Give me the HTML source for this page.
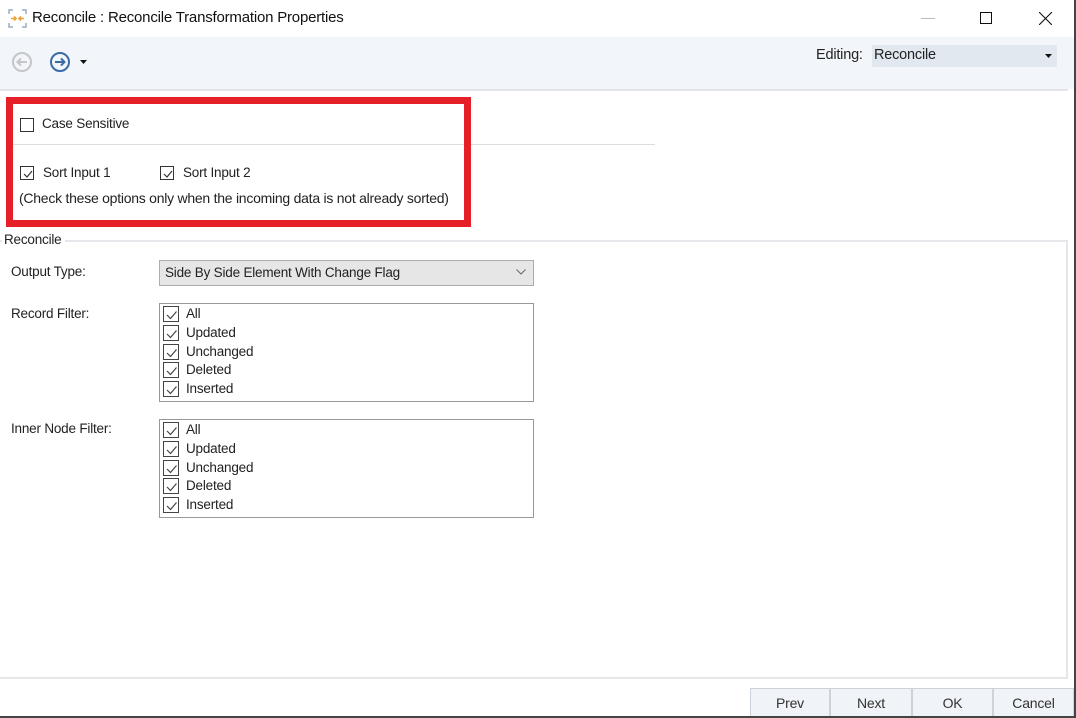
<!DOCTYPE html>
<html><head><meta charset="utf-8"><style>
*{margin:0;padding:0;box-sizing:border-box}
body{width:1076px;height:718px;position:relative;background:#fff;font-family:"Liberation Sans",sans-serif;font-size:13.5px;color:#222;overflow:hidden;letter-spacing:-0.2px}
.a{position:absolute;white-space:nowrap}
.cb{position:absolute;width:14px;height:14px;border:1px solid #333;background:#fff}
.cb svg{position:absolute;left:1px;top:1px}
.btn{position:absolute;top:688px;height:30px;background:#f0f3f7;border:1px solid #ccd3dc;text-align:center;line-height:28px;font-size:14px;color:#333}
</style></head><body>
<svg class="a" style="left:8px;top:9px" width="19" height="19" viewBox="0 0 19 19">
<path d="M1 5V1h4M14 1h4v4M18 14v4h-4M5 18H1v-4" fill="none" stroke="#9aaec4" stroke-width="1.5"/>
<path d="M3 9.5h5M6 7.5l2 2-2 2M16 9.5h-5M13 7.5l-2 2 2 2" fill="none" stroke="#e8a23a" stroke-width="1.6"/>
</svg>
<div class="a" style="left:32px;top:9px;font-size:15px;color:#111;letter-spacing:-0.2px">Reconcile : Reconcile Transformation Properties</div>
<div class="a" style="left:921px;top:18px;width:14px;height:1px;background:#bbb"></div>
<div class="a" style="left:980px;top:12px;width:12px;height:12px;border:1px solid #111"></div>
<svg class="a" style="left:1039px;top:12px" width="13" height="13"><path d="M0 0L13 13M13 0L0 13" stroke="#111" stroke-width="1.1"/></svg>
<div class="a" style="left:0;top:37px;width:1076px;height:52px;background:#f2f5f9"></div>
<div class="a" style="left:0;top:89px;width:1068px;height:2px;background:#e3e5e8"></div>
<svg class="a" style="left:11px;top:51px" width="22" height="22" viewBox="0 0 22 22"><circle cx="11" cy="11" r="9" fill="none" stroke="#c4c6c9" stroke-width="2"/><path d="M16 11H7M10 7.5L6.5 11 10 14.5" fill="none" stroke="#c4c6c9" stroke-width="2"/></svg>
<svg class="a" style="left:49px;top:51px" width="22" height="22" viewBox="0 0 22 22"><circle cx="11" cy="11" r="9" fill="none" stroke="#3a6aa8" stroke-width="2"/><path d="M6 11h9M12 7.5l3.5 3.5-3.5 3.5" fill="none" stroke="#3a6aa8" stroke-width="2"/></svg>
<svg class="a" style="left:80px;top:60px" width="7" height="4"><path d="M0 0h7L3.5 4z" fill="#111"/></svg>
<div class="a" style="left:816px;top:47px;font-size:14.5px;color:#222">Editing:</div>
<div class="a" style="left:872px;top:45px;width:185px;height:22px;background:#e1e8f0"></div>
<div class="a" style="left:874px;top:47px;font-size:14.5px;color:#222">Reconcile</div>
<svg class="a" style="left:1045px;top:54px" width="7" height="4"><path d="M0 0h7L3.5 4z" fill="#111"/></svg>
<div class="cb" style="left:20px;top:118px"></div>
<div class="a" style="left:42px;top:116px">Case Sensitive</div>
<div class="a" style="left:13px;top:144px;width:642px;height:1px;background:#dcdde0"></div>
<div class="cb" style="left:20px;top:166px"><svg width="12" height="12"><path d="M2 6l3 3 5-6" fill="none" stroke="#333" stroke-width="1.2"/></svg></div>
<div class="a" style="left:43px;top:165px">Sort Input 1</div>
<div class="cb" style="left:160px;top:166px"><svg width="12" height="12"><path d="M2 6l3 3 5-6" fill="none" stroke="#333" stroke-width="1.2"/></svg></div>
<div class="a" style="left:183px;top:165px">Sort Input 2</div>
<div class="a" style="left:19px;top:190px;font-size:14px;letter-spacing:-0.25px">(Check these options only when the incoming data is not already sorted)</div>
<div class="a" style="left:6px;top:97px;width:465px;height:130px;border:7px solid #e52029"></div>
<div class="a" style="left:0;top:240px;width:1068px;height:439px;border:2px solid #e6e7ea;border-left:none"></div>
<div class="a" style="left:2px;top:232px;background:#fff;padding:0 4px 0 2px;font-size:13.5px">Reconcile</div>
<div class="a" style="left:11px;top:264px">Output Type:</div>
<div class="a" style="left:159px;top:260px;width:375px;height:26px;background:#e6e6e6;border:1px solid #adadad"></div>
<div class="a" style="left:165px;top:265px">Side By Side Element With Change Flag</div>
<svg class="a" style="left:516px;top:269px" width="10" height="6"><path d="M0.5 0.5L5 5l4.5-4.5" fill="none" stroke="#666"/></svg>
<div class="a" style="left:11px;top:306px">Record Filter:</div>
<div class="a" style="left:159px;top:303px;width:375px;height:99px;border:1px solid #999"></div>
<div class="a" style="left:11px;top:421px">Inner Node Filter:</div>
<div class="a" style="left:159px;top:419px;width:375px;height:99px;border:1px solid #999"></div>
<div id="lists"></div>
<div class="btn" style="left:750px;width:80px">Prev</div>
<div class="btn" style="left:830px;width:82px">Next</div>
<div class="btn" style="left:912px;width:81px">OK</div>
<div class="btn" style="left:993px;width:81px">Cancel</div>
<div class="a" style="left:0;top:716px;width:1076px;height:2px;background:#444"></div>
<div class="a" style="left:1074px;top:0;width:2px;height:718px;background:#444"></div>
<script>
var h='',items=['All','Updated','Unchanged','Deleted','Inserted'];
[305,421].forEach(function(t){items.forEach(function(s,i){var y=t+i*18.8;
h+='<div class="cb" style="left:163px;top:'+(y+1)+'px;width:16px;height:16px;border-color:#444"><svg width="14" height="14"><path d="M2 7l3.5 3.5 6-7" fill="none" stroke="#444" stroke-width="1.2"/></svg></div>';
h+='<div class="a" style="left:186px;top:'+(y+1)+'px">'+s+'</div>';});});
document.getElementById('lists').innerHTML=h;
</script>
</body></html>
